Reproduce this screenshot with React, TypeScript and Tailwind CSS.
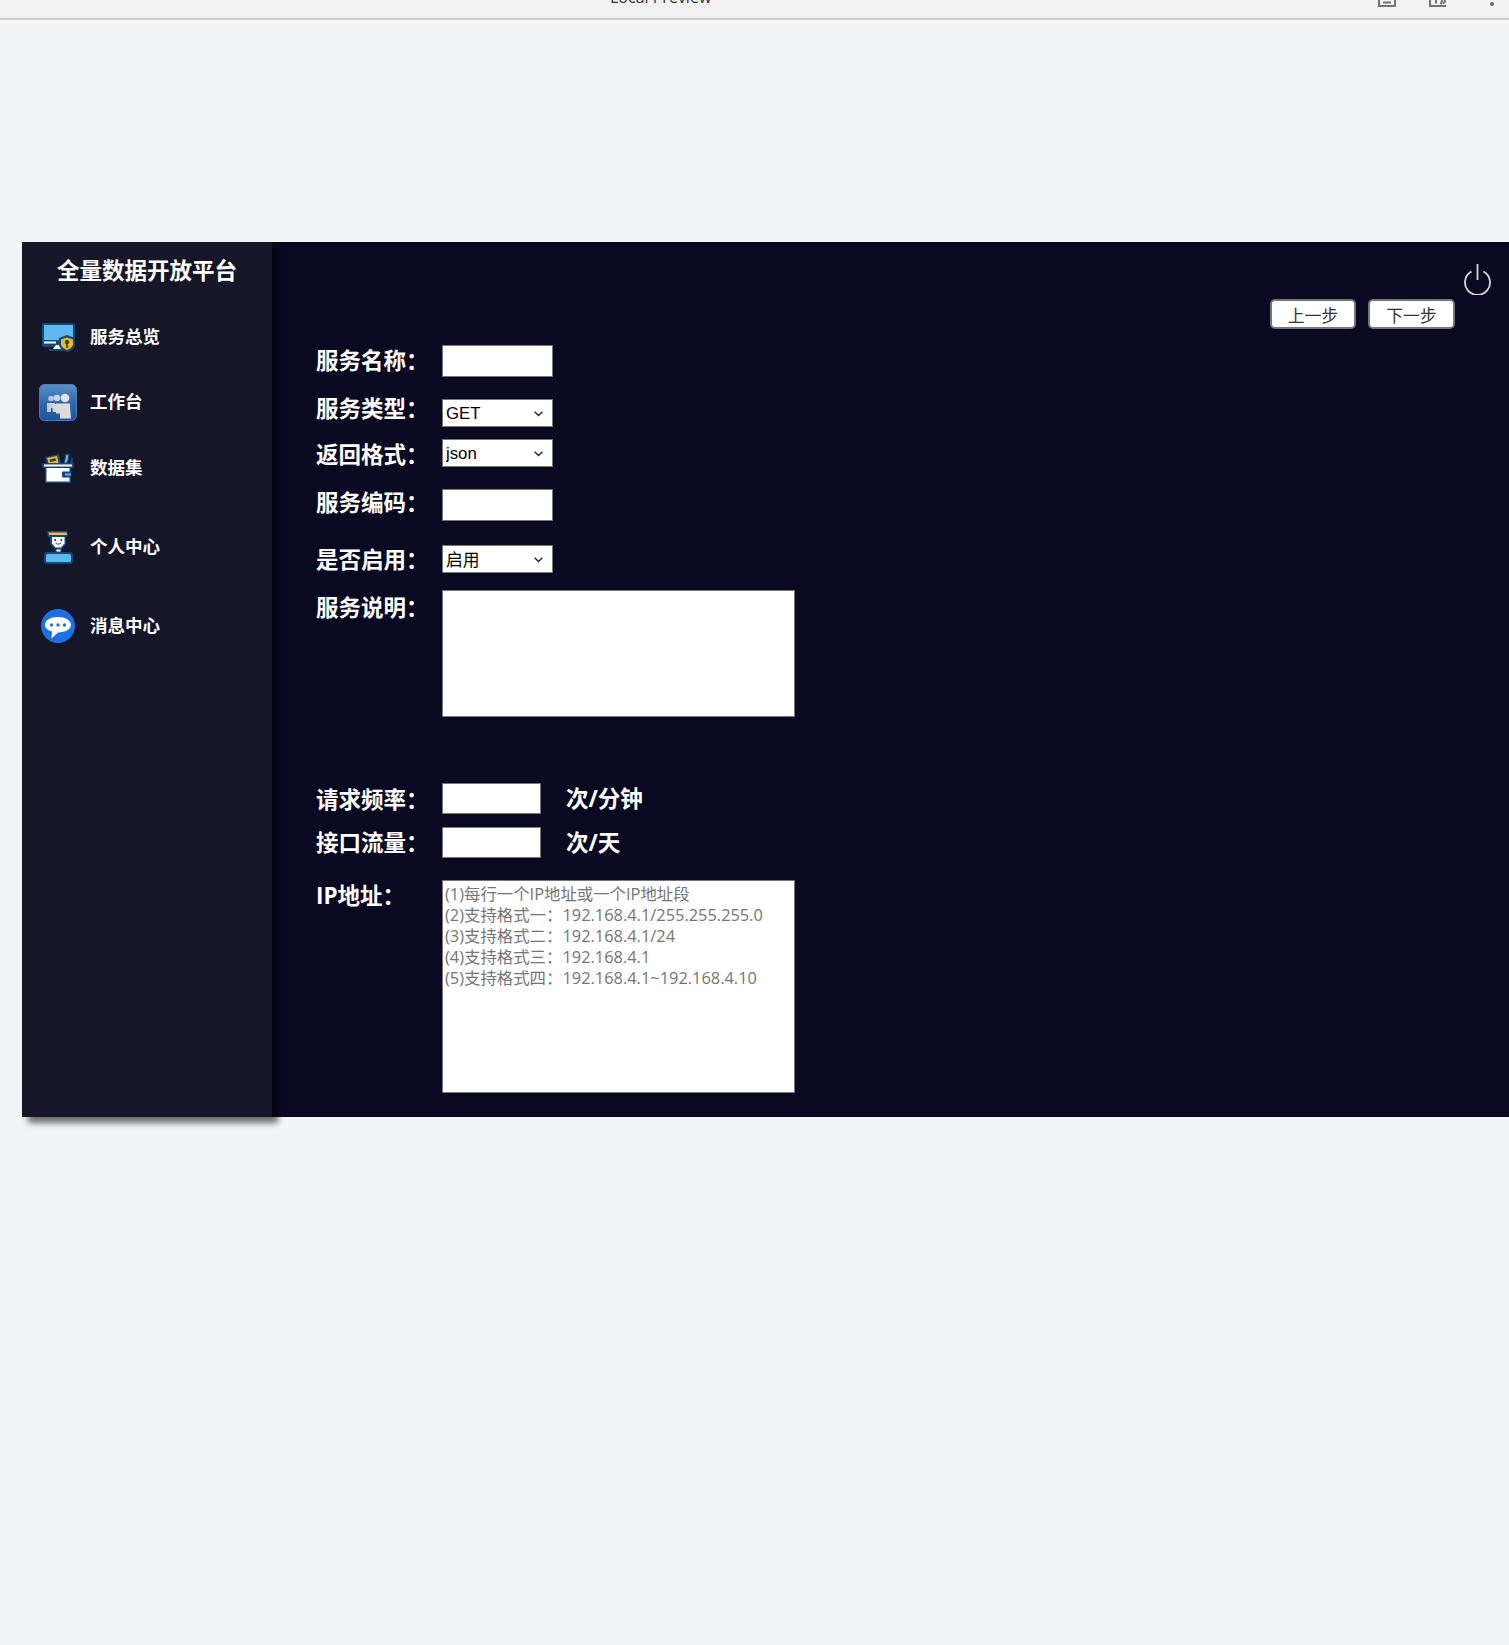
import type { ReactNode } from "react";

const CJK = "font-['Open_Sans','Noto_Sans_CJK_SC',sans-serif]";
const BOX = "border border-[#767676] bg-white outline-none";

function MonitorIcon() {
  return (
    <svg width="33" height="29" viewBox="0 0 33 29">
      <rect x="0" y="0" width="33" height="24" rx="2" fill="#14477a" />
      <rect x="2" y="2" width="29" height="15" fill="#5cb8ee" />
      <rect x="2" y="18.500" width="12" height="2" fill="#fff" />
      <path d="M11 26h12l-3-4h-6z" fill="#fff" />
      <rect x="7" y="26" width="18" height="2" fill="#14477a" />
      <path d="M25 12l8 3v7c0 3-4 6-8 7-4-1-8-4-8-7v-7z" fill="#14477a" />
      <path d="M25 14.500l6 2v5c0 2-3 4.500-6 5.500-3-1-6-3.500-6-5.500v-5z" fill="#f5b60f" />
      <circle cx="25" cy="19" r="2.200" fill="#14477a" />
      <rect x="24.200" y="20" width="1.600" height="5" fill="#14477a" />
    </svg>
  );
}

function UsersIcon() {
  return (
    <svg width="38" height="37" viewBox="0 0 38 37">
      <defs>
        <linearGradient id="tile" x1="0" y1="0" x2="0" y2="1">
          <stop offset="0" stopColor="#5d8fc9" />
          <stop offset="0.5" stopColor="#2f69ad" />
          <stop offset="1" stopColor="#1c559f" />
        </linearGradient>
      </defs>
      <rect x="0.500" y="0.500" width="37" height="36" rx="5" fill="url(#tile)" stroke="#4a7cb8" />
      <circle cx="12" cy="14.500" r="2.800" fill="#b9c6d8" />
      <circle cx="18" cy="14" r="3.300" fill="#ccd3de" />
      <circle cx="26" cy="14" r="4.300" fill="#e3e3e3" />
      <path d="M8 19h8v5h-4v4H8z" fill="#c3ccd8" />
      <path d="M13 20h8v8h-7z" fill="#d2d6dc" />
      <path d="M17 19.500h14v3l1 12H21v-5h-4z" fill="#dcdcdc" />
    </svg>
  );
}

function WalletIcon() {
  return (
    <svg width="32" height="30" viewBox="0 0 32 30">
      <path d="M3 4l14-3 2 10H5z" fill="#14477a" />
      <path d="M5 5l10-2 1.500 7H6.500z" fill="#f5b60f" />
      <path d="M7.500 6.500l6-1.200.5 2.500-6 1.200z" fill="#14477a" />
      <path d="M22 10l2-9 3 .8-1.500 8.200z" fill="#5cb8ee" stroke="#14477a" />
      <path d="M28 10l1-5 2 .5-.5 4.500z" fill="#14477a" />
      <rect x="0" y="10" width="32" height="5" rx="1" fill="#14477a" />
      <rect x="2" y="11.500" width="28" height="2" fill="#fff" />
      <rect x="3" y="15" width="26" height="15" fill="#14477a" />
      <rect x="4.500" y="15" width="23" height="13.500" fill="#fff" />
      <rect x="20" y="18.500" width="9" height="6" rx="1" fill="#14477a" />
      <rect x="23" y="20.500" width="6" height="2" fill="#5cb8ee" />
    </svg>
  );
}

function PersonIcon() {
  return (
    <svg width="29" height="33" viewBox="0 0 29 33">
      <path d="M3 0h20l1 5-2 1v7l-4 5H10L6 13V6H4z" fill="#14477a" />
      <path d="M4.500 1.500h18l.5 2.500H5z" fill="#f8b93a" />
      <path d="M8 6h12.500v6.500L17 16.500H11.500L8 12.500z" fill="#fff" />
      <rect x="10.500" y="8" width="1.600" height="2" fill="#14477a" />
      <rect x="16.500" y="8" width="1.600" height="2" fill="#14477a" />
      <path d="M11.500 12c1.500 1.500 4 1.500 5.500 0" fill="none" stroke="#14477a" />
      <rect x="12" y="18" width="5" height="3" fill="#fff" stroke="#14477a" />
      <rect x="0" y="21" width="29" height="12" rx="3" fill="#14477a" />
      <rect x="2" y="23" width="25" height="8" rx="1.500" fill="#5cb8ee" />
    </svg>
  );
}

function ChatIcon() {
  return (
    <svg width="34" height="34" viewBox="0 0 34 34">
      <circle cx="17" cy="17" r="17" fill="#1e6fe0" />
      <path d="M17 8c7.500 0 13 3.300 13 7.800 0 4.500-5.500 7.600-13 7.600l-6.500 6.100.5-6.900C6.500 21.300 4 19 4 15.800 4 11.300 9.500 8 17 8z" fill="#fff" />
      <circle cx="10.500" cy="16" r="1.700" fill="#1e6fe0" />
      <circle cx="17" cy="16" r="1.700" fill="#1e6fe0" />
      <circle cx="23.500" cy="16" r="1.700" fill="#1e6fe0" />
    </svg>
  );
}

function PowerIcon() {
  return (
    <svg width="27" height="31" viewBox="0 0 27 31" fill="none" stroke="#d9d9d9" strokeWidth="1.800">
      <path d="M7.500 7.500a12.500 12.500 0 1 0 12 0" />
      <path d="M13.500 0v16" />
    </svg>
  );
}

function NavItem({ icon, label, className }: { icon: ReactNode; label: string; className: string }) {
  return (
    <a className={`flex h-10 items-center gap-3 pl-4 ${className}`}>
      <span className="flex w-10 justify-center">{icon}</span>
      <span className="mb-0.5 text-[17.500px] font-bold text-white">{label}</span>
    </a>
  );
}

function Row({
  label,
  labelClass,
  className,
  children,
}: {
  label: string;
  labelClass: string;
  className: string;
  children: ReactNode;
}) {
  return (
    <div className={`flex items-start ${className}`}>
      <label className={`w-[126px] shrink-0 text-[22.500px] leading-5 font-bold text-white ${labelClass}`}>
        {label}
      </label>
      {children}
    </div>
  );
}

function Select({ options, className }: { options: string[]; className: string }) {
  return (
    <div className="relative h-7 w-[111px]">
      <select className={`h-7 w-full appearance-none pt-px pl-[3px] text-[16.800px] text-black ${BOX} ${className}`}>
        {options.map((o) => (
          <option key={o}>{o}</option>
        ))}
      </select>
      <svg
        className="pointer-events-none absolute top-3 right-[10px]"
        width="9"
        height="6"
        viewBox="0 0 9 6"
        fill="none"
        stroke="#222"
        strokeWidth="1.400"
      >
        <path d="M.7.8 4.500 4.600 8.300.8" />
      </svg>
    </div>
  );
}

const IP_HINT =
  "(1)每行一个IP地址或一个IP地址段\n(2)支持格式一：192.168.4.1/255.255.255.0\n(3)支持格式二：192.168.4.1/24\n(4)支持格式三：192.168.4.1\n(5)支持格式四：192.168.4.1~192.168.4.10";

export default function App() {
  return (
    <div className={`min-h-[1645px] bg-[#f3f4f6] ${CJK}`}>
      <div className="flex h-5 items-start overflow-hidden border-b-2 border-[#cbcbcb] bg-[#f1f1f1] pl-[610px]">
        <span className="-mt-[15px] text-[16px] leading-[24px] text-[#333]">Local Preview</span>
        <div className="ml-auto flex items-start pr-[15px]">
          <svg width="18" height="7" viewBox="0 0 18 7" fill="none" stroke="#737373" strokeWidth="2">
            <path d="M1 0v6h16V0" />
            <path d="M5 2.500h8" />
          </svg>
          <svg className="ml-[33px]" width="18" height="7" viewBox="0 0 18 7" fill="none" stroke="#737373" strokeWidth="2">
            <path d="M1 0v6h16" />
            <path d="M7 0v3.500M11 3.500c1 0 2-1 2-3.500M14 3c1 0 2-1 2-3" />
          </svg>
          <span className="mt-0.5 ml-[43px] size-1 rounded-full bg-[#666]" />
        </div>
      </div>

      <div className="mt-[222px] ml-[22px] flex h-[875px]">
        <aside className="relative z-10 w-[250px] shrink-0 bg-[#151729] pt-[9px] shadow-[6px_6px_6px_rgba(0,0,0,0.55)]">
          <h1 className="h-[38px] text-center text-[22.500px] leading-10 font-bold text-white">全量数据开放平台</h1>
          <nav>
            <NavItem className="mt-7" icon={<MonitorIcon />} label="服务总览" />
            <NavItem className="mt-[25px]" icon={<UsersIcon />} label="工作台" />
            <NavItem className="mt-[26px]" icon={<WalletIcon />} label="数据集" />
            <NavItem className="mt-[39px]" icon={<PersonIcon />} label="个人中心" />
            <NavItem className="mt-[39px]" icon={<ChatIcon />} label="消息中心" />
          </nav>
        </aside>

        <main className="min-w-0 flex-1 bg-[#090a22]">
          <div className="flex flex-col items-end">
            <div className="pt-[22px] pr-[18px]">
              <PowerIcon />
            </div>
            <div className="mt-1 flex gap-3 pr-[54px]">
              <button className="h-[30px] w-[86px] rounded-[5px] border-2 border-[#767676] bg-white pt-[3px] text-[16.800px] leading-5 text-[#333]">
                上一步
              </button>
              <button className="h-[30px] w-[87px] rounded-[5px] border-2 border-[#767676] bg-white pt-[3px] text-[16.800px] leading-5 text-[#333]">
                下一步
              </button>
            </div>
          </div>

          <form className="mt-4 pl-11">
            <Row label="服务名称：" labelClass="pt-1.5" className="">
              <input className={`h-8 w-[111px] ${BOX}`} />
            </Row>
            <Row label="服务类型：" labelClass="pt-0" className="mt-[22px]">
              <Select className="font-['Liberation_Sans',sans-serif]" options={["GET", "POST"]} />
            </Row>
            <Row label="返回格式：" labelClass="pt-1.5" className="mt-3">
              <Select className="font-['Liberation_Sans',sans-serif]" options={["json", "xml"]} />
            </Row>
            <Row label="服务编码：" labelClass="pt-1" className="mt-[22px]">
              <input className={`h-8 w-[111px] ${BOX}`} />
            </Row>
            <Row label="是否启用：" labelClass="pt-[5px]" className="mt-6">
              <Select className="" options={["启用", "停用"]} />
            </Row>
            <Row label="服务说明：" labelClass="pt-2" className="mt-[17px]">
              <textarea className={`h-[127px] w-[353px] resize-none ${BOX}`} />
            </Row>
            <Row label="请求频率：" labelClass="pt-[7px]" className="mt-[66px]">
              <input className={`h-[31px] w-[99px] ${BOX}`} />
              <span className="ml-[25px] pt-px text-[22.500px] leading-[30px] font-bold text-white">次/分钟</span>
            </Row>
            <Row label="接口流量：" labelClass="pt-1.5" className="mt-[13px]">
              <input className={`h-[31px] w-[99px] ${BOX}`} />
              <span className="ml-[25px] pt-px text-[22.500px] leading-[30px] font-bold text-white">次/天</span>
            </Row>
            <Row label="IP地址：" labelClass="pt-1.5" className="mt-[22px]">
              <textarea
                className={`h-[213px] w-[353px] resize-none p-0.5 text-[16.400px] leading-[21px] placeholder:text-[#757575] ${BOX}`}
                placeholder={IP_HINT}
              />
            </Row>
          </form>
        </main>
      </div>
    </div>
  );
}
